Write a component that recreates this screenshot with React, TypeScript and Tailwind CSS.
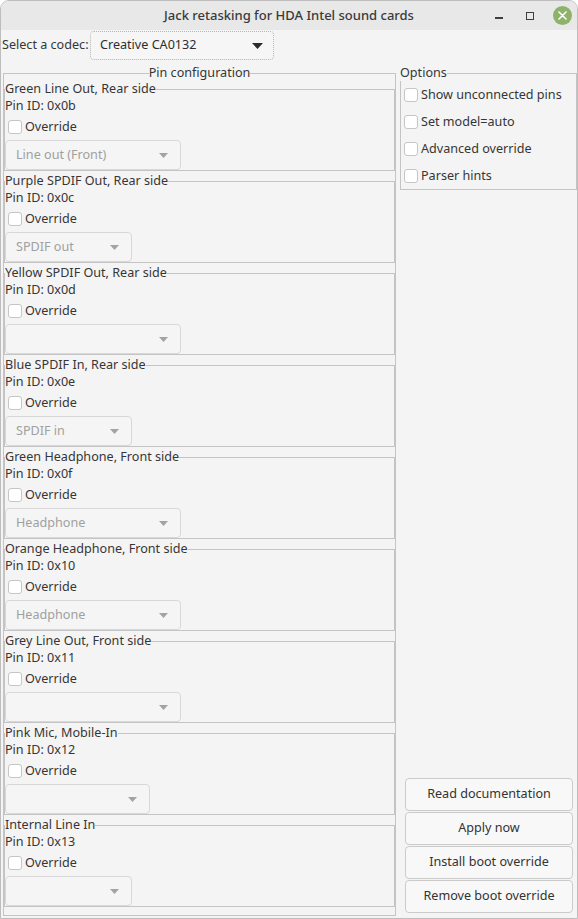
import React from "react";

type Pin = { label: string; id: string; value: string; w: string };

const pins: Pin[] = [
  { label: "Green Line Out, Rear side", id: "0x0b", value: "Line out (Front)", w: "w-[176px]" },
  { label: "Purple SPDIF Out, Rear side", id: "0x0c", value: "SPDIF out", w: "w-[127px]" },
  { label: "Yellow SPDIF Out, Rear side", id: "0x0d", value: "", w: "w-[176px]" },
  { label: "Blue SPDIF In, Rear side", id: "0x0e", value: "SPDIF in", w: "w-[127px]" },
  { label: "Green Headphone, Front side", id: "0x0f", value: "Headphone", w: "w-[176px]" },
  { label: "Orange Headphone, Front side", id: "0x10", value: "Headphone", w: "w-[176px]" },
  { label: "Grey Line Out, Front side", id: "0x11", value: "", w: "w-[176px]" },
  { label: "Pink Mic, Mobile-In", id: "0x12", value: "", w: "w-[145px]" },
  { label: "Internal Line In", id: "0x13", value: "", w: "w-[127px]" },
];

const options = ["Show unconnected pins", "Set model=auto", "Advanced override", "Parser hints"];
const buttons = ["Read documentation", "Apply now", "Install boot override", "Remove boot override"];

function Check() {
  return <div className="w-[14px] h-[14px] shrink-0 rounded-[3px] border border-[#c6c6c6] bg-white" />;
}

function SmallArrow() {
  return (
    <svg width="9" height="5" viewBox="0 0 9 5" className="shrink-0">
      <polygon points="0,0 9,0 4.5,5" fill="#a3a3a3" />
    </svg>
  );
}

function PinFrame({ pin }: { pin: Pin }) {
  return (
    <div className="h-[90px] flex flex-col shrink-0">
      <div className="h-[16px] flex">
        <div className="w-px mt-[8px] border-t border-l border-[#c4c4c4]" />
        <span className="leading-[16px] whitespace-nowrap">{pin.label}</span>
        <div className="flex-1 mt-[8px] border-t border-r border-[#c4c4c4]" />
      </div>
      <div className="flex-1 flex flex-col border-l border-r border-b border-[#c4c4c4]">
        <div className="h-[18px] leading-[18px]">Pin ID: {pin.id}</div>
        <div className="h-[24px] flex items-center ml-[3px] gap-[3px]">
          <Check />
          <span className="leading-[16px]">Override</span>
        </div>
        <div
          className={`${pin.w} mt-px h-[30px] flex items-center justify-between pl-[10px] pr-[12px] rounded-[4px] border border-[#d8d8d8] bg-[#f5f5f5] text-[#a0a0a0]`}
        >
          <span className="whitespace-nowrap">{pin.value}</span>
          <SmallArrow />
        </div>
      </div>
    </div>
  );
}

export default function App() {
  return (
    <div className="w-[578px] h-[919px] flex flex-col border border-[#bdbdbd] rounded-t-[9px] overflow-hidden bg-[#f4f4f4] text-[#363636] text-[12.6px] font-['Noto_Sans',sans-serif]">
      {/* Title bar */}
      <div className="h-[29px] shrink-0 grid grid-cols-[1fr_auto_1fr] items-center bg-[#e8e8e8]">
        <div />
        <div className="text-[13px] font-medium text-[#3a3a3a] whitespace-nowrap">
          Jack retasking for HDA Intel sound cards
        </div>
        <div className="flex items-center justify-end pr-[5px]">
          <div className="w-[8px] h-[2px] bg-[#3f3f3f] mt-[4px]" />
          <div className="ml-[23px] w-[8px] h-[8px] border-[1.5px] border-[#3f3f3f] mt-[1px]" />
          <div className="ml-[19px] w-[19px] h-[19px] rounded-full bg-[#8db26a] flex items-center justify-center">
            <svg width="9" height="9" viewBox="0 0 9 9">
              <path d="M1 1 L8 8 M8 1 L1 8" stroke="#ffffff" strokeWidth="1.6" strokeLinecap="round" />
            </svg>
          </div>
        </div>
      </div>

      {/* Codec row */}
      <div className="h-[30px] shrink-0 flex items-start">
        <div className="w-[88px] ml-px h-[30px] flex items-center whitespace-nowrap">Select a codec:</div>
        <div className="mt-px w-[184px] h-[29px] flex items-center justify-between pl-[9px] pr-[10px] rounded-[4px] border border-dotted border-[#b5b5b5] bg-[#f6f6f6] text-[#2e2e2e]">
          <span className="whitespace-nowrap">Creative CA0132</span>
          <svg width="11" height="6" viewBox="0 0 11 6">
            <polygon points="0,0 11,0 5.5,6" fill="#2b2b2b" />
          </svg>
        </div>
      </div>

      {/* Main */}
      <div className="flex-1 mt-[5px] mb-[2px] flex pl-[2px] gap-[4px] min-h-0">
        {/* Pin configuration */}
        <div className="w-[393px] shrink-0 flex flex-col">
          <div className="h-[16px] flex shrink-0">
            <div className="flex-1 mt-[8px] border-t border-l border-[#c4c4c4]" />
            <span className="leading-[16px] whitespace-nowrap">Pin configuration</span>
            <div className="flex-1 mt-[8px] border-t border-r border-[#c4c4c4]" />
          </div>
          <div className="flex-1 flex flex-col gap-[2px] border-l border-r border-b border-[#c4c4c4]">
            {pins.map((p) => (
              <PinFrame key={p.id} pin={p} />
            ))}
          </div>
        </div>

        {/* Right column */}
        <div className="flex-1 flex flex-col">
          <div className="flex flex-col shrink-0">
            <div className="h-[16px] flex">
              <span className="leading-[16px] whitespace-nowrap">Options</span>
              <div className="flex-1 mt-[8px] border-t border-r border-[#c4c4c4]" />
            </div>
            <div className="flex flex-col border-l border-r border-b border-[#c4c4c4]">
              {options.map((o) => (
                <div key={o} className="h-[27px] flex items-center ml-[3px] gap-[3px]">
                  <Check />
                  <span className="leading-[16px] whitespace-nowrap">{o}</span>
                </div>
              ))}
            </div>
          </div>
          <div className="flex-1" />
          <div className="flex flex-col gap-px ml-[5px] mr-[4px] mb-[3px]">
            {buttons.map((b) => (
              <div
                key={b}
                className="h-[33px] flex items-center justify-center rounded-[4px] border border-[#cbcbcb] bg-[#f8f8f8] text-[#333333] whitespace-nowrap"
              >
                {b}
              </div>
            ))}
          </div>
        </div>
      </div>
    </div>
  );
}
